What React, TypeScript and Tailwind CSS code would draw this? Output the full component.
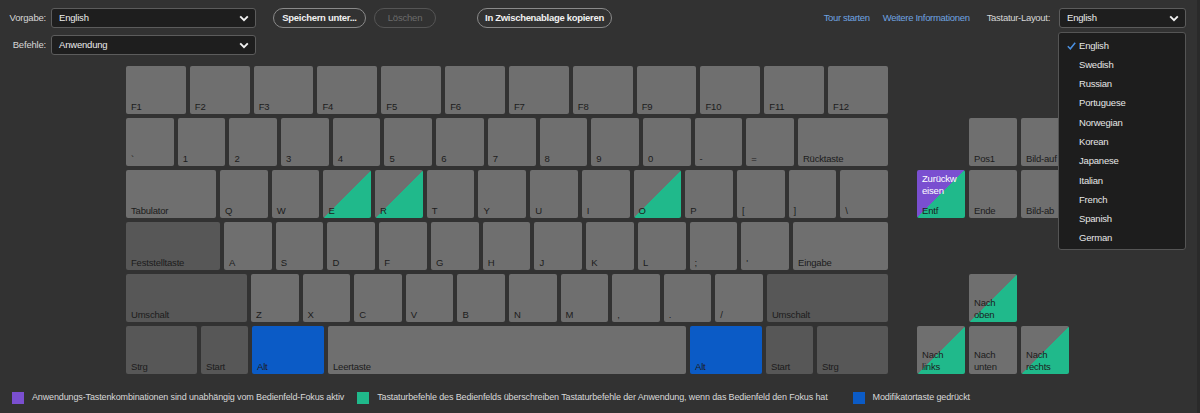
import React from "react";

type Variant = "n" | "d" | "t" | "b" | "pt";

const variantClass: Record<Variant, string> = {
  n: "bg-[#6f6f6f]",
  d: "bg-[#575757]",
  t: "bg-[linear-gradient(to_top_left,#20b98b_50%,#6f6f6f_50%)]",
  b: "bg-[#0b5bc6]",
  pt: "bg-[linear-gradient(to_top_left,#20b98b_50%,#7a4fd0_50%)]",
};

function Key({
  label,
  v = "n",
  w,
  top,
}: {
  label: React.ReactNode;
  v?: Variant;
  w?: string;
  top?: React.ReactNode;
}) {
  return (
    <div
      className={
        "relative h-[48px] rounded-[2px] flex flex-col justify-between pl-[5px] pb-[1px] pt-[3px] overflow-hidden " +
        variantClass[v] +
        " " +
        (w ? w + " shrink-0" : "flex-1 basis-0 min-w-0")
      }
    >
      <div className="text-[9.5px] leading-[12px] text-white tracking-[-0.2px]">{top}</div>
      <div className="text-[9.5px] leading-[12px] text-[#1c1c1c] tracking-[-0.2px]">{label}</div>
    </div>
  );
}

function Chevron() {
  return (
    <svg width="10" height="7" viewBox="0 0 10 7" className="shrink-0">
      <path d="M1.2 1.4 L5 5.2 L8.8 1.4" fill="none" stroke="#f2f2f2" strokeWidth="1.9" />
    </svg>
  );
}

function Select({ value, w }: { value: string; w: string }) {
  return (
    <div
      className={
        "h-[20px] rounded-[3px] border border-[#5c5c5c] bg-[#1e1e1e] flex items-center justify-between pl-[7px] pr-[6px] " +
        w
      }
    >
      <span className="text-[9.5px] text-[#ececec] tracking-[-0.2px]">{value}</span>
      <Chevron />
    </div>
  );
}

const Spacer = () => <div className="h-[48px]" />;

export default function App() {
  const langs = [
    "English",
    "Swedish",
    "Russian",
    "Portuguese",
    "Norwegian",
    "Korean",
    "Japanese",
    "Italian",
    "French",
    "Spanish",
    "German",
  ];
  return (
    <div
      className="relative w-[1200px] h-[413px] overflow-hidden bg-[#323232] border-r-[3px] border-[#2a2a2a]"
      style={{ fontFamily: '"Liberation Sans", Arial, sans-serif' }}
    >
      {/* Toolbar row 1 */}
      <div className="flex items-center justify-between pt-[8px] pr-[11px]">
        <div className="flex items-center">
          <div className="w-[46px] text-right text-[9.5px] text-[#d6d6d6] tracking-[-0.2px]">Vorgabe:</div>
          <div className="ml-[5px]">
            <Select value="English" w="w-[205px]" />
          </div>
          <div className="ml-[17px] h-[20px] w-[93px] rounded-full border border-[#8a8a8a] flex items-center justify-center text-[9.5px] font-bold text-[#f0f0f0] tracking-[-0.3px]">
            Speichern unter...
          </div>
          <div className="ml-[8px] h-[20px] w-[62px] rounded-full border border-[#555555] flex items-center justify-center text-[9.5px] text-[#6c6c6c] tracking-[-0.2px]">
            Löschen
          </div>
          <div className="ml-[41px] h-[20px] w-[135px] rounded-full border border-[#8a8a8a] flex items-center justify-center text-[9.5px] font-bold text-[#f0f0f0] tracking-[-0.3px]">
            In Zwischenablage kopieren
          </div>
        </div>
        <div className="flex items-center">
          <span className="text-[9.5px] text-[#6fa3e0] tracking-[-0.35px]">Tour starten</span>
          <span className="ml-[13px] text-[9.5px] text-[#6fa3e0] tracking-[-0.3px]">Weitere Informationen</span>
          <span className="ml-[17px] text-[9.5px] text-[#d6d6d6] tracking-[-0.3px]">Tastatur-Layout:</span>
          <div className="ml-[9px]">
            <Select value="English" w="w-[127px]" />
          </div>
        </div>
      </div>

      {/* Toolbar row 2 */}
      <div className="flex items-center mt-[7px]">
        <div className="w-[46px] text-right text-[9.5px] text-[#d6d6d6] tracking-[-0.2px]">Befehle:</div>
        <div className="ml-[5px]">
          <Select value="Anwendung" w="w-[205px]" />
        </div>
      </div>

      {/* Keyboard */}
      <div className="flex mt-[11px] ml-[126px]">
        <div className="w-[762px] flex flex-col gap-[4px]">
          <div className="flex gap-[4px]">
            {["F1", "F2", "F3", "F4", "F5", "F6", "F7", "F8", "F9", "F10", "F11", "F12"].map((k) => (
              <Key key={k} label={k} />
            ))}
          </div>
          <div className="flex gap-[4px]">
            {["`", "1", "2", "3", "4", "5", "6", "7", "8", "9", "0", "-", "="].map((k) => (
              <Key key={k} label={k} />
            ))}
            <Key label="Rücktaste" w="w-[90px]" />
          </div>
          <div className="flex gap-[4px]">
            <Key label="Tabulator" w="w-[90px]" />
            <Key label="Q" />
            <Key label="W" />
            <Key label="E" v="t" />
            <Key label="R" v="t" />
            <Key label="T" />
            <Key label="Y" />
            <Key label="U" />
            <Key label="I" />
            <Key label="O" v="t" />
            <Key label="P" />
            <Key label="[" />
            <Key label="]" />
            <Key label="\" />
          </div>
          <div className="flex gap-[4px]">
            <Key label="Feststelltaste" v="d" w="w-[94px]" />
            {["A", "S", "D", "F", "G", "H", "J", "K", "L", ";", "'"].map((k) => (
              <Key key={k} label={k} />
            ))}
            <Key label="Eingabe" w="w-[95px]" />
          </div>
          <div className="flex gap-[4px]">
            <Key label="Umschalt" v="d" w="w-[121px]" />
            {["Z", "X", "C", "V", "B", "N", "M", ",", ".", "/"].map((k) => (
              <Key key={k} label={k} />
            ))}
            <Key label="Umschalt" v="d" w="w-[121px]" />
          </div>
          <div className="flex gap-[4px]">
            <Key label="Strg" v="d" w="w-[71px]" />
            <Key label="Start" v="d" w="w-[47px]" />
            <Key label="Alt" v="b" w="w-[72px]" />
            <Key label="Leertaste" />
            <Key label="Alt" v="b" w="w-[72px]" />
            <Key label="Start" v="d" w="w-[47px]" />
            <Key label="Strg" v="d" w="w-[71px]" />
          </div>
        </div>

        {/* Nav cluster */}
        <div className="ml-[29px] grid grid-cols-[48px_48px_48px] gap-[4px]">
          <Spacer />
          <Spacer />
          <Spacer />
          <Spacer />
          <Key label="Pos1" />
          <Key label="Bild-auf" />
          <Key label="Entf" v="pt" top={<>Zurückw<br />eisen</>} />
          <Key label="Ende" />
          <Key label="Bild-ab" />
          <Spacer />
          <Spacer />
          <Spacer />
          <Spacer />
          <Key label={<>Nach<br />oben</>} v="t" />
          <Spacer />
          <Key label={<>Nach<br />links</>} v="t" />
          <Key label={<>Nach<br />unten</>} />
          <Key label={<>Nach<br />rechts</>} v="t" />
        </div>
      </div>

      {/* Legend */}
      <div className="flex items-center mt-[17px] ml-[12px] text-[9px] text-[#d8d8d8] tracking-[-0.13px]">
        <div className="w-[12px] h-[12px] bg-[#7a4fd0]" />
        <span className="ml-[8px]">Anwendungs-Tastenkombinationen sind unabhängig vom Bedienfeld-Fokus aktiv</span>
        <div className="ml-[13px] w-[12px] h-[12px] bg-[#20b98b]" />
        <span className="ml-[8px]">
          Tastaturbefehle des Bedienfelds überschreiben Tastaturbefehle der Anwendung, wenn das Bedienfeld den Fokus hat
        </span>
        <div className="ml-[25px] w-[12px] h-[12px] bg-[#0b5bc6]" />
        <span className="ml-[8px]">Modifikatortaste gedrückt</span>
      </div>

      {/* Dropdown */}
      <div className="absolute left-[1058px] top-[32px] w-[128px] h-[218px] rounded-[3px] border border-[#555555] bg-[#1d1d1d] pt-[3px]">
        {langs.map((l, i) => (
          <div key={l} className="h-[19.3px] flex items-center">
            <div className="w-[20px] flex justify-center pl-[4px]">
              {i === 0 && (
                <svg width="9" height="8" viewBox="0 0 9 8">
                  <path d="M0.8 4.3 L3.3 6.8 L8.2 0.8" fill="none" stroke="#4a90e2" strokeWidth="1.5" />
                </svg>
              )}
            </div>
            <span className="text-[9.5px] text-[#e6e6e6] tracking-[-0.2px]">{l}</span>
          </div>
        ))}
      </div>
    </div>
  );
}
